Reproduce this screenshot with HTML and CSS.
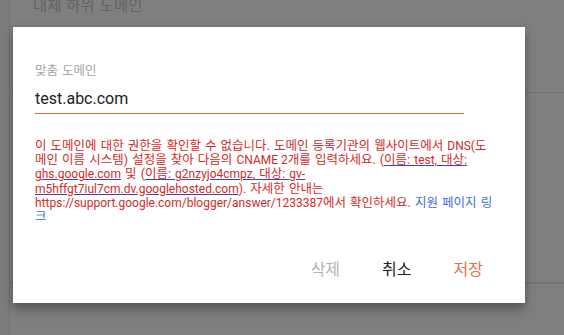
FILE: index.html
```html
<!DOCTYPE html>
<html lang="ko">
<head>
<meta charset="utf-8">
<title>맞춤 도메인</title>
<link rel="stylesheet" href="styles.css">
</head>
<body>
<div class="page">
  <div class="rail"></div>
  <div class="main">
    <div class="row row-head"><span class="bg-title">대체 하위 도메인</span></div>
    <div class="row row-mid"></div>
    <div class="row"></div>
  </div>
</div>

<div class="dialog" role="dialog">
  <div class="field">
    <label class="field-label">맞춤 도메인</label>
    <div class="field-input">test.abc.com</div>
  </div>
  <p class="error">이 도메인에 대한 권한을 확인할 수 없습니다. 도메인 등록기관의 웹사이트에서 <span class="en">DNS(</span>도<br>메인 이름 시스템) 설정을 찾아 다음의 <span class="en">CNAME 2</span>개를 입력하세요. (<span class="u">이름: <span class="en">test,</span> 대상:<br><span class="en">ghs.google.com</span></span> 및 (<span class="u">이름: <span class="en">g2nzyjo4cmpz,</span> 대상: <span class="en">gv-<br>m5hffgt7iul7cm.dv.googlehosted.com</span></span><span class="en">)</span>. 자세한 안내는<br><span class="en">https://support.google.com/blogger/answer/1233387</span>에서 확인하세요. <a class="help" href="#">지원 페이지 링<br>크</a></p>
  <div class="actions">
    <button class="btn btn-delete">삭제</button>
    <button class="btn btn-cancel">취소</button>
    <button class="btn btn-save">저장</button>
  </div>
</div>
</body>
</html>
```

FILE: styles.css
```css
html, body {
  margin: 0;
  padding: 0;
  height: 100%;
}
body {
  background: #7f7f7f;
  font-family: Roboto, "Noto Sans CJK KR", "Noto Sans", sans-serif;
  overflow: hidden;
}
.page {
  display: flex;
  height: 335px;
}
.rail {
  width: 9px;
  background: #7c7c7c;
  border-right: 1px solid #737373;
  flex: none;
}
.main {
  flex: 1;
  display: flex;
  flex-direction: column;
}
.row {
  border-bottom: 1px solid #747474;
}
.row-head {
  height: 92px;
  padding-left: 23px;
}
.row-mid {
  height: 189px;
}
.bg-title {
  display: block;
  margin-top: -5px;
  font-size: 15.5px;
  line-height: 22px;
  word-spacing: 1px;
  color: #636363;
}
.dialog {
  position: absolute;
  left: 13px;
  top: 27px;
  width: 512px;
  height: 276px;
  box-sizing: border-box;
  background: #fff;
  box-shadow: 0 7px 10px rgba(0, 0, 0, 0.28), 0 0 6px rgba(0, 0, 0, 0.12);
  padding: 36px 21px 15px 22px;
  display: flex;
  flex-direction: column;
}
.field {
  width: 429px;
}
.field-label {
  display: block;
  font-size: 12.5px;
  line-height: 16px;
  word-spacing: 1px;
  color: #a6a6a6;
}
.field-input {
  margin-top: 10px;
  font-size: 16px;
  line-height: 20px;
  color: #212121;
  padding-bottom: 4px;
  border-bottom: 1px solid #e2672f;
}
.error {
  margin: 25px 0 0;
  font-size: 12.5px;
  line-height: 14.2px;
  word-spacing: 1px;
  color: #d42a2a;
  white-space: nowrap;
}
.en {
  font-size: 12px;
  word-spacing: 0;
}
.u {
  text-decoration: underline;
  text-decoration-color: #3a44a8;
}
.help {
  color: #3b6fdb;
  text-decoration: none;
}
.actions {
  margin-top: auto;
  display: flex;
  justify-content: flex-end;
}
.btn {
  font-family: inherit;
  font-size: 16px;
  line-height: 36px;
  height: 36px;
  padding: 0 21px;
  border: 0;
  background: transparent;
  cursor: pointer;
}
.btn-delete { color: #b3b3b3; }
.btn-cancel { color: #222; }
.btn-save { color: #e8703f; }
```
